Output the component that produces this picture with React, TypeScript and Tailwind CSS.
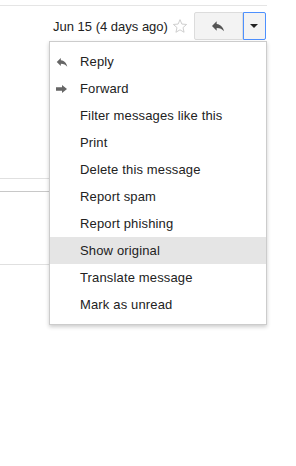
import * as React from 'react';

const items = [
  { label: 'Reply', icon: 'reply' },
  { label: 'Forward', icon: 'forward' },
  { label: 'Filter messages like this' },
  { label: 'Print' },
  { label: 'Delete this message' },
  { label: 'Report spam' },
  { label: 'Report phishing' },
  { label: 'Show original', active: true },
  { label: 'Translate message' },
  { label: 'Mark as unread' },
];

function ReplyIcon({ className }: { className?: string }) {
  return (
    <svg viewBox="0 0 24 24" className={className} fill="currentColor">
      <path d="M10 9V5l-7 7 7 7v-4.1c5 0 8.5 1.6 11 5.1-1-5-4-10-11-11z" />
    </svg>
  );
}

function ForwardIcon({ className }: { className?: string }) {
  return (
    <svg viewBox="0 0 11 8" className={className} fill="currentColor">
      <path d="M0 2.2h6V0l5 4-5 4V5.8H0z" />
    </svg>
  );
}

export default function App() {
  return (
    <div
      className="relative w-[296px] h-[466px] bg-white overflow-hidden"
      style={{ fontFamily: '"Liberation Sans", Arial, sans-serif' }}
    >
      {/* top rule */}
      <div className="mt-[5px] h-px w-[267px] bg-[#e5e5e5]" />

      {/* header row */}
      <div className="mt-[6px] flex items-center h-[28px] pl-[53px]">
        <span className="text-[13px] text-[#222] leading-none">Jun 15 (4 days ago)</span>
        <svg viewBox="0 0 24 24" className="ml-[4px] w-[16px] h-[16px] text-[#c6c6c6]" fill="none" stroke="currentColor" strokeWidth="1.3">
          <path d="M12 2.5l2.8 6.6 7.1.6-5.4 4.7 1.6 7-6.1-3.7-6.1 3.7 1.6-7-5.4-4.7 7.1-.6z" />
        </svg>
        <div className="ml-[6px] flex h-[28px]">
          <div className="w-[49px] h-full flex items-center justify-center border border-[#dcdcdc] bg-[#f3f3f3] rounded-l-[2px]">
            <ReplyIcon className="w-[16px] h-[16px] text-[#555]" />
          </div>
          <div className="w-[23px] h-full flex items-center justify-center border border-[#4d90fe] bg-[#f3f3f3] rounded-r-[2px]">
            <span className="block w-0 h-0 border-l-[4px] border-r-[4px] border-t-[4px] border-l-transparent border-r-transparent border-t-[#222]" />
          </div>
        </div>
      </div>

      {/* underlying content rules */}
      <div className="mt-[138px] h-px w-[60px] bg-[#e0e0e0]" />
      <div className="mt-[12px] h-px w-[60px] bg-[#c8c8c8]" />
      <div className="mt-[72px] h-px w-[60px] bg-[#e0e0e0]" />

      {/* dropdown menu */}
      <div className="absolute left-[49px] top-[41px] w-[218px] bg-white border border-[#ccc] shadow-[0_2px_4px_rgba(0,0,0,0.2)] py-[6px]">
        {items.map((item) => (
          <div
            key={item.label}
            className={
              'flex items-center h-[27px] pl-[30px] text-[13px] tracking-[0.15px] text-[#222] relative ' +
              (item.active ? 'bg-[#e5e5e5]' : '')
            }
          >
            {item.icon === 'reply' && (
              <ReplyIcon className="absolute left-[5px] top-[7px] w-[14px] h-[14px] text-[#666]" />
            )}
            {item.icon === 'forward' && (
              <ForwardIcon className="absolute left-[6px] top-[10px] w-[11px] h-[8px] text-[#666]" />
            )}
            {item.label}
          </div>
        ))}
      </div>
    </div>
  );
}
